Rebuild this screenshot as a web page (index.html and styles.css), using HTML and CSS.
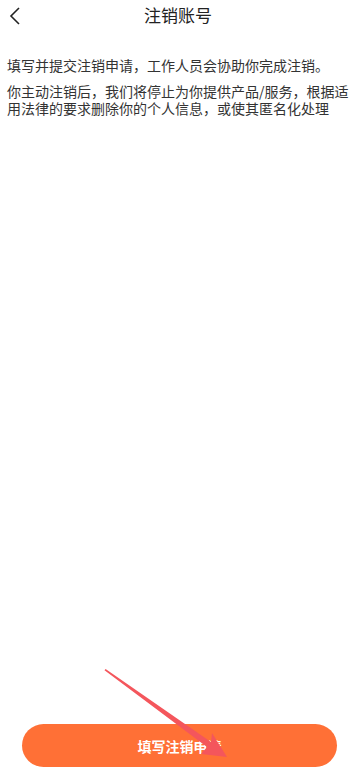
FILE: index.html
```html
<!DOCTYPE html>
<html>
<head>
  <meta charset="utf-8">
  <title>注销账号</title>
  <link rel="stylesheet" href="styles.css">
</head>
<body>
  <div class="page">
    <div class="header">
      <span class="back">
        <svg width="12" height="18" viewBox="0 0 12 18"><path d="M10 1 L2 9 L10 17" fill="none" stroke="#222" stroke-width="1.6"/></svg>
      </span>
      <div class="title">注销账号</div>
    </div>

    <div class="content">
      <p class="tip">填写并提交注销申请，工作人员会协助你完成注销。</p>
      <p class="tip">你主动注销后，我们将停止为你提供产品/服务，根据适用法律的要求删除你的个人信息，或使其匿名化处理</p>
    </div>

    <div class="footer">
      <button class="submit">填写注销申请</button>
    </div>

    <!-- 标注箭头 -->
    <svg class="arrow" width="356" height="772" viewBox="0 0 356 772">
      <polygon points="104.5,670.2 105.6,669 211,742 212,733 227,757 201,754 207,747" fill="#f4565c"/>
    </svg>
  </div>
</body>
</html>
```

FILE: styles.css
```css
html, body { margin: 0; padding: 0; background: #fff; }
body { font-family: "Noto Sans CJK SC", "Noto Sans", sans-serif; color: #333; }
.page { position: relative; width: 356px; height: 772px; display: flex; flex-direction: column; overflow: hidden; }
.header { height: 30px; position: relative; display: flex; align-items: center; justify-content: center; }
.back { position: absolute; left: 9px; top: 6px; }
.title { font-size: 17px; color: #222; line-height: 30px; }
.content { flex: 1; padding: 27px 4px 0 7px; }
.tip { margin: 0 0 9px; font-size: 14px; line-height: 17px; color: #333; }
.footer { padding: 0 19px 5px 22px; }
.submit { display: block; width: 100%; height: 43px; border: none; border-radius: 22px; background: #ff7036; color: #fff; font-family: inherit; font-size: 14px; font-weight: bold; padding: 0; }
.arrow { position: absolute; left: 0; top: 0; pointer-events: none; }
```
